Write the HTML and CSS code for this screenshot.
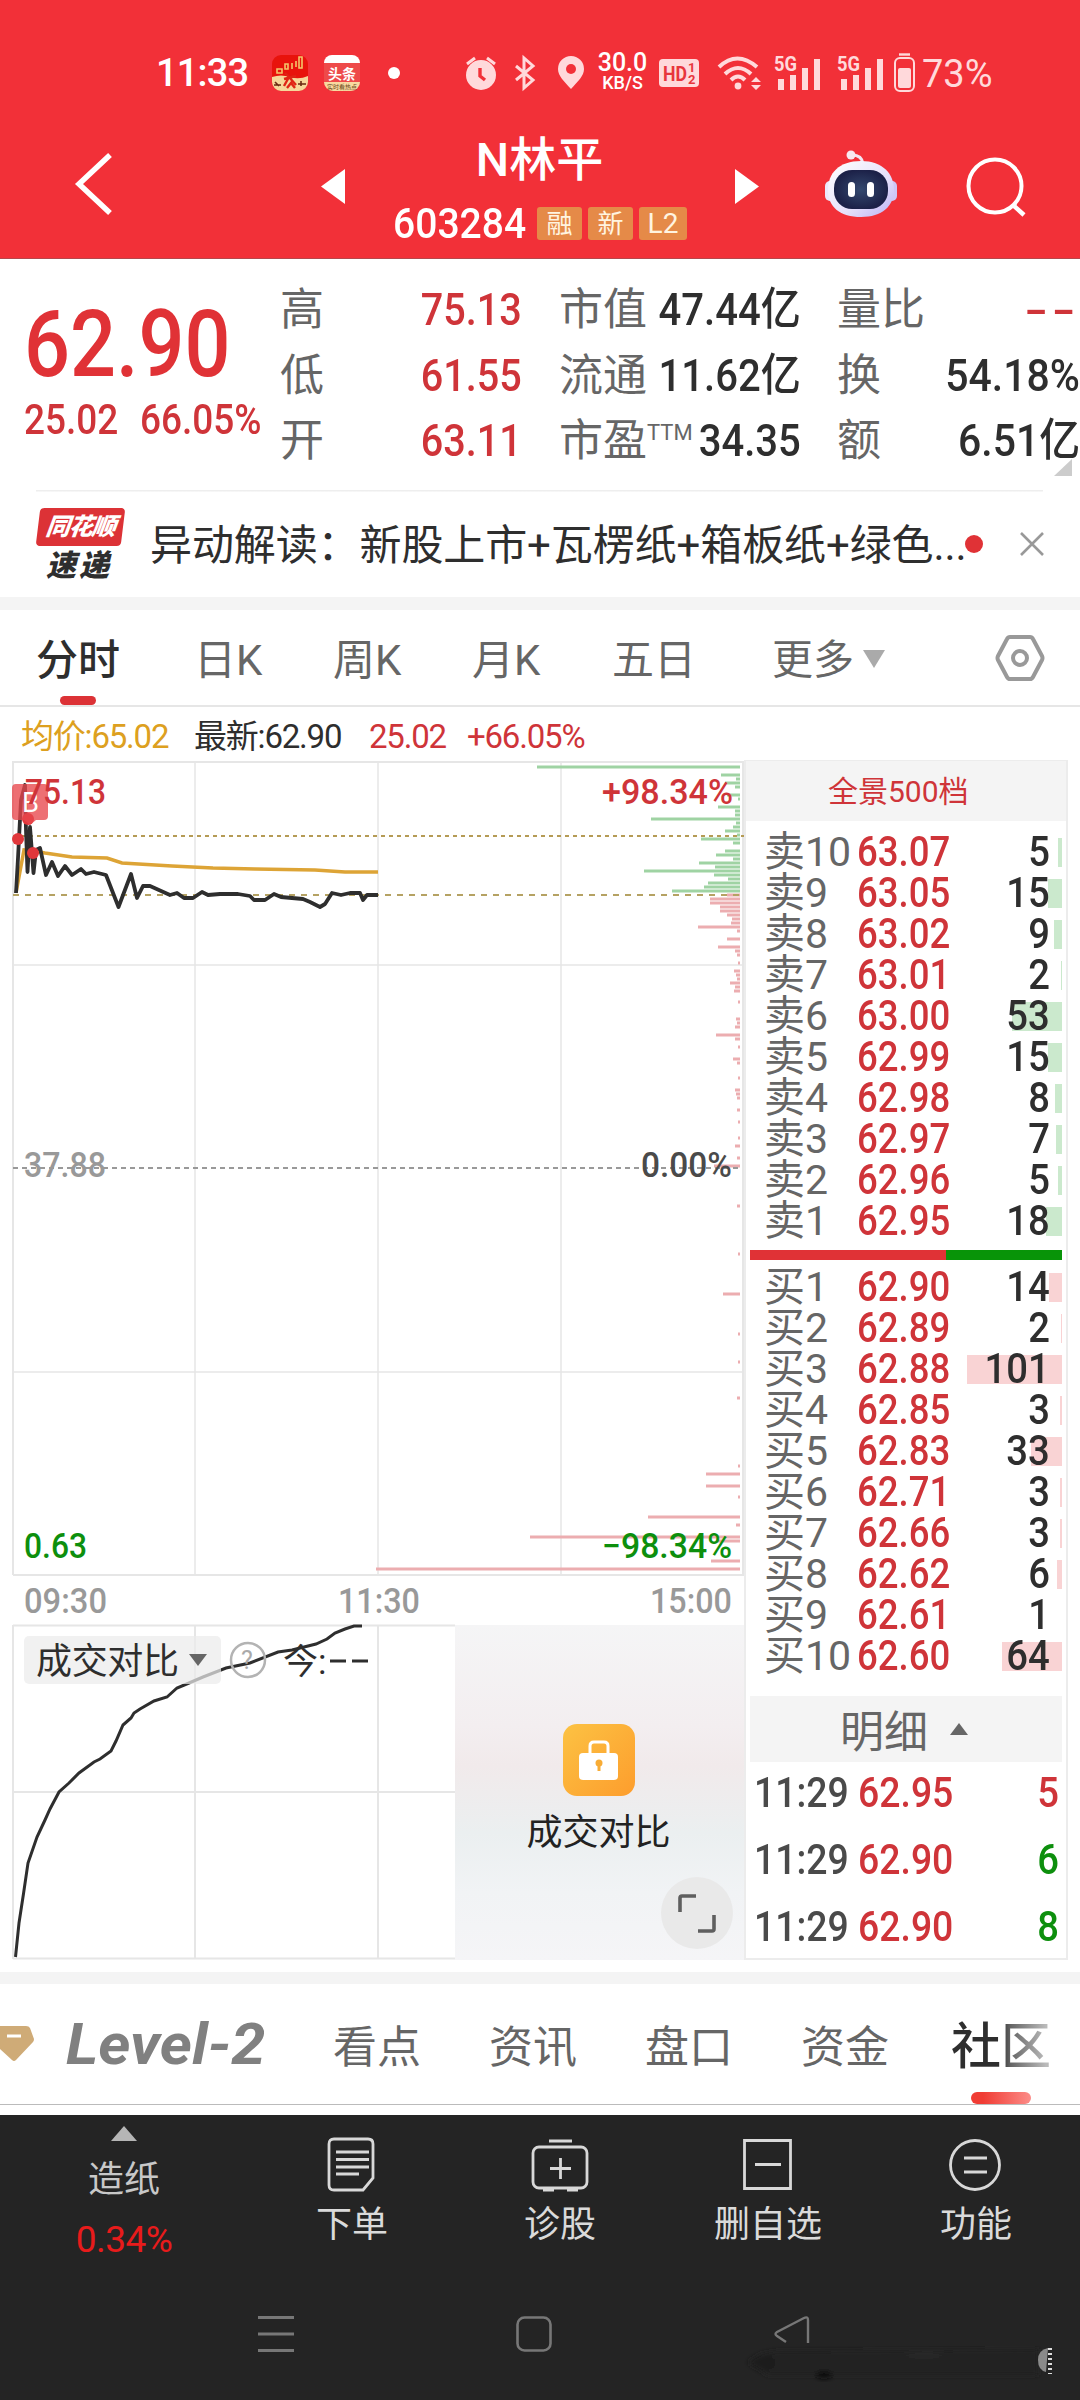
FILE: index.html
```html
<!DOCTYPE html>
<html lang="zh-CN">
<head>
    <meta charset="UTF-8">
    <meta name="viewport" content="width=1080">
    <title>N林平 603284</title>
    <link rel="stylesheet" href="styles.css">
</head>
<body>
    <header class="header">
        <div class="status-bar">
            <span class="clock">11:33</span>
            <svg class="app-icon first" viewBox="0 0 36 36">
                <rect width="36" height="36" rx="9" fill="#e8130c"/>
                <path d="M0 22q9-3 18 0t18-1v6a9 9 0 0 1-9 9H9a9 9 0 0 1-9-9z" fill="#f6d79a"/>
                <path d="M5 14h5v4H5zM13 9h3v5h-3zM20 8v6M24 6v6M27 2h3v11h-3z" stroke="#f3c66a" stroke-width="1.6" fill="none"/>
                <path d="M13 18l4 4-5 9M17 22l7 8M12 24l12-3M15 33l4-5 4 5" stroke="#e02415" stroke-width="2.4" fill="none"/>
                <path d="M2 30h7M3 27l4 4M26 29h8M29 26v5" stroke="#6b2a12" stroke-width="1.6" fill="none"/>
            </svg>
            <svg class="app-icon" viewBox="0 0 36 36">
                <rect width="36" height="36" rx="9" fill="#ee4a4a"/>
                <path d="M0 8a8 8 0 0 1 8-8h20a8 8 0 0 1 8 8z" fill="#fff"/>
                <path d="M0 27h36a9 9 0 0 1-9 9H9a9 9 0 0 1-9-9z" fill="#f8d9a0"/>
                <text x="18" y="24" class="app-name">头条</text>
                <text x="18" y="34" class="app-sub">实时看热点</text>
            </svg>
            <i class="dot"></i>
            <svg class="alarm" viewBox="0 0 32 34">
                <circle cx="16" cy="19" r="15" fill="#ffd9db"/>
                <path d="M2 8l8-6M30 8l-8-6" stroke="#ffd9db" stroke-width="3"/>
                <path d="M15 12v8l5 4" stroke="#f23038" stroke-width="3.4" fill="none"/>
            </svg>
            <svg class="bluetooth" viewBox="0 0 20 34">
                <path d="M1 10l17 14-9 8V2l9 8L1 24" fill="none" stroke="#ffd9db" stroke-width="3"/>
            </svg>
            <svg class="pin" viewBox="0 0 26 34">
                <path d="M13 33C6 25 0 20 0 13a13 13 0 0 1 26 0c0 7-6 12-13 20z" fill="#ffd9db"/>
                <circle cx="13" cy="13" r="5" fill="#f23038"/>
            </svg>
            <div class="speed"><b>30.0</b><span>KB/S</span></div>
            <svg class="hd" viewBox="0 0 40 28">
                <rect width="40" height="28" rx="4" fill="#ffd9db"/>
                <text x="4" y="22" font-size="21" font-weight="700" textLength="24" lengthAdjust="spacingAndGlyphs">HD</text>
                <text x="29" y="13" font-size="13" font-weight="700">1</text>
                <text x="29" y="25" font-size="13" font-weight="700">2</text>
            </svg>
            <svg class="wifi" viewBox="0 0 46 34">
                <path d="M2 11q18-17 38 0M8 18q13-12 26 0M14 24q7-7 14 0" fill="none" stroke="#ffd9db" stroke-width="4"/>
                <circle cx="21" cy="30" r="3.4" fill="#ffd9db"/>
                <path d="M34 26l5-5 5 5zM34 29l5 5 5-5z" fill="#ffd9db"/>
            </svg>
            <svg class="signal" viewBox="0 0 48 34">
                <text x="0" y="15" font-size="20" font-weight="700" textLength="23" lengthAdjust="spacingAndGlyphs">5G</text>
                <path d="M7 23v11M19 19v15M31 12v22M43 3v31" stroke="#ffd9db" stroke-width="6"/>
            </svg>
            <svg class="signal second" viewBox="0 0 48 34">
                <text x="0" y="15" font-size="20" font-weight="700" textLength="23" lengthAdjust="spacingAndGlyphs">5G</text>
                <path d="M7 23v11M19 19v15M31 12v22M43 3v31" stroke="#ffd9db" stroke-width="6"/>
            </svg>
            <svg class="battery" viewBox="0 0 21 40">
                <path d="M5 1.5h11" stroke="#ffd9db" stroke-width="2.4"/>
                <rect x="1" y="5" width="19" height="33" rx="5" fill="none" stroke="#ffd9db" stroke-width="2"/>
                <rect x="4" y="15" width="13" height="20" rx="2" fill="#ffd9db"/>
            </svg>
            <span class="percent">73%</span>
        </div>
        <div class="title-bar">
            <svg class="back" viewBox="0 0 38 66"><path d="M35 4L4 33l31 29" fill="none" stroke="#fff" stroke-width="5.5"/></svg>
            <svg class="prev" viewBox="0 0 24 35"><path d="M24 0v35L0 17.5z" fill="#fff"/></svg>
            <div class="stock">
                <h1>N林平</h1>
                <div class="code">
                    <span>603284</span>
                    <i>融</i><i>新</i><i class="l2">L2</i>
                </div>
            </div>
            <svg class="next" viewBox="0 0 24 35"><path d="M0 0v35l24-17.500z" fill="#fff"/></svg>
            <svg class="robot" viewBox="0 0 72 68">
                <defs>
                    <linearGradient id="shell" x1="0" y1="0" x2="1" y2="1">
                        <stop offset="0" stop-color="#fff"/><stop offset=".6" stop-color="#e6e0fa"/><stop offset="1" stop-color="#b9b0f4"/>
                    </linearGradient>
                    <radialGradient id="visor"><stop offset="0" stop-color="#33486e"/><stop offset="1" stop-color="#1c2148"/></radialGradient>
                </defs>
                <path d="M27 5q10 0 11 9" fill="none" stroke="#f4e6f2" stroke-width="3"/>
                <circle cx="26" cy="5" r="4.500" fill="#f8e9f0"/>
                <rect x="0" y="31" width="10" height="20" rx="5" fill="#ece8fb"/>
                <rect x="62" y="31" width="10" height="20" rx="5" fill="#cfc6f6"/>
                <path d="M36 11c22 0 33 13 33 29S57 67 36 67 3 57 3 40s11-29 33-29z" fill="url(#shell)"/>
                <rect x="9" y="20" width="54" height="39" rx="18" fill="url(#visor)"/>
                <rect x="23" y="32" width="7" height="15" rx="3.500" fill="#fff"/>
                <rect x="42" y="32" width="7" height="15" rx="3.500" fill="#fff"/>
            </svg>
            <svg class="search" viewBox="0 0 60 60">
                <circle cx="29" cy="29" r="26.500" fill="none" stroke="#fff" stroke-width="4"/>
                <path d="M47 48l11 10" stroke="#fff" stroke-width="4.500"/>
            </svg>
        </div>
    </header>

    <section class="quote">
        <div class="last">
            <strong>62.90</strong>
            <p><span>25.02</span><span>66.05%</span></p>
        </div>
        <dl class="col-a">
            <div><dt>高</dt><dd>75.13</dd></div>
            <div><dt>低</dt><dd>61.55</dd></div>
            <div><dt>开</dt><dd>63.11</dd></div>
        </dl>
        <dl class="col-b">
            <div><dt>市值</dt><dd>47.44亿</dd></div>
            <div><dt>流通</dt><dd>11.62亿</dd></div>
            <div><dt>市盈<sup>TTM</sup></dt><dd>34.35</dd></div>
        </dl>
        <dl class="col-c">
            <div><dt>量比</dt><dd class="none">--</dd></div>
            <div><dt>换</dt><dd>54.18%</dd></div>
            <div><dt>额</dt><dd>6.51亿</dd></div>
        </dl>
        <i class="corner"></i>
    </section>

    <section class="news">
        <div class="news-logo"><b>同花顺</b><span>速递</span></div>
        <p>异动解读：新股上市+瓦楞纸+箱板纸+绿色...</p>
        <i class="unread"></i>
        <svg class="close" viewBox="0 0 24 24"><path d="M1 1l22 22M23 1L1 23" stroke="#999" stroke-width="2.600"/></svg>
    </section>

    <nav class="period">
        <a class="active">分时</a><a>日K</a><a>周K</a><a>月K</a><a>五日</a><a class="more">更多<i></i></a>
        <svg class="gear" viewBox="0 0 48 46">
            <path d="M14 2h20q2 0 3 2l9 17q1 2 0 4l-9 17q-1 2-3 2H14q-2 0-3-2L2 25q-1-2 0-4l9-17q1-2 3-2z" fill="none" stroke="#999" stroke-width="4"/>
            <circle cx="24" cy="23" r="7" fill="none" stroke="#999" stroke-width="4"/>
        </svg>
    </nav>

    <div class="tick">
        <span class="avg">均价:65.02</span><span class="now">最新:62.90</span><span class="chg">25.02</span><span class="pct">+66.05%</span>
    </div>

    <main class="board">
        <div class="charts">
            <!-- minute chart, y runs in page pixels -->
            <svg class="minute" viewBox="0 760 744 865" width="744" height="865">
                <g fill="none" stroke="#e6e6e6" stroke-width="2">
                    <path d="M13 762H744M13 1575H744M13 761V1575M743 761V1575"/>
                    <path d="M195 761V1575M378 761V1575M561 761V1575M13 965H744M13 1372H744" stroke-width="1.500"/>
                </g>
                <path class="asks" d="M537 767H740M721 775H740M736 779H740M725 783H740M735 787H740M727 795H740M738 799H740M718 807H740M735 811H740M735 815H740M651 819H740M736 823H740M733 827H740M725 831H740M737 835H740M701 839H740M733 843H740M725 851H740M716 855H740M733 859H740M699 863H740M715 867H740M644 871H740M714 875H740M728 879H740M708 883H740M704 887H740M672 891H740"/>
                <path class="bids" d="M727 895H740M710 899H740M710 903H740M720 907H740M720 911H740M727 915H740M732 919H740M731 923H740M698 927H740M737 931H740M727 939H740M718 947H740M735 951H740M737 955H740M738 963H740M734 971H740M736 975H740M737 979H740M730 983H740M735 987H740M734 991H740M738 1002H740M736 1019H740M737 1023H740M735 1027H740M716 1035H740M735 1039H740M738 1047H740M733 1059H740M737 1063H740M738 1078H740M735 1090H740M736 1094H740M737 1098H740M737 1110H740M738 1122H740M738 1138H740M735 1146H740M737 1158H740M714 1166H740M737 1206H740M738 1254H740M723 1294H740M738 1334H740M738 1362H740M737 1398H740M738 1466H740M706 1474H740M706 1486H740M738 1497H740M648 1517H740M736 1525H740M530 1537H740M716 1541H740M711 1561H740M376 1569H740"/>
                <path d="M13 836H744" stroke="#b59b55" stroke-width="2" stroke-dasharray="4 4"/>
                <path d="M13 895H744" stroke="#b5a263" stroke-width="2" stroke-dasharray="6 6"/>
                <path d="M13 1168H740" stroke="#999" stroke-width="1.800" stroke-dasharray="5 4"/>
                <path d="M16 893L24 850 34 851 45 853 72 857 107 858 122 863 172 866 213 868 255 869 315 870 345 872H378" fill="none" stroke="#dda436" stroke-width="3.500"/>
                <path d="M16 893L18 858 21 800 25 785 26 830 27.500 872 30 827 33.500 873 36 850 40 848 46 875 52 862 58 876 65 866 72 875 81 869 86 874 94 872 106 875 118.500 907 131 874 137 898 143 886 150 886 170 895 177 893 184 898 193 898 202 892 208 895 220 894 238 894 250 896 254 900 265 900 274 894 281 897 303 899 310 902 320 907 325 904 332 893 341 895 350 893 360 893 363 900 367 895 378 895" fill="none" stroke="#2e2e2e" stroke-width="3.800" stroke-linejoin="round"/>
                <g fill="#e0373b">
                    <circle cx="18" cy="839" r="6"/><circle cx="28" cy="819" r="6"/><circle cx="33" cy="853" r="6"/>
                </g>
                <path d="M16 784h28q4 0 4 4v28q0 4-4 4h-8l-6 5-6-5h-8q-4 0-4-4v-28q0-4 4-4z" fill="#e8474b" fill-opacity=".78"/>
                <text x="22" y="812" font-size="28" fill="#fff" textLength="17" lengthAdjust="spacingAndGlyphs">B</text>
                <g font-size="35" font-weight="500">
                    <text x="25" y="803.500" fill="#cf3439" textLength="81" lengthAdjust="spacingAndGlyphs">75.13</text>
                    <text x="602" y="803.500" fill="#cf3439" textLength="131" lengthAdjust="spacingAndGlyphs">+98.34%</text>
                    <text x="24" y="1177" fill="#999" textLength="82" lengthAdjust="spacingAndGlyphs">37.88</text>
                    <text x="641" y="1177" fill="#4a4a4a" textLength="91" lengthAdjust="spacingAndGlyphs">0.00%</text>
                    <text x="24" y="1558" fill="#0d8f0d" textLength="63" lengthAdjust="spacingAndGlyphs">0.63</text>
                    <text x="602" y="1558" fill="#0d8f0d" textLength="130" lengthAdjust="spacingAndGlyphs">−98.34%</text>
                    <g fill="#999">
                        <text x="24" y="1613" textLength="83" lengthAdjust="spacingAndGlyphs">09:30</text>
                        <text x="338" y="1613" textLength="82" lengthAdjust="spacingAndGlyphs">11:30</text>
                        <text x="650" y="1613" textLength="82" lengthAdjust="spacingAndGlyphs">15:00</text>
                    </g>
                </g>
            </svg>
            <div class="volume">
                <svg viewBox="0 1625 455 335" width="455" height="335">
                    <path d="M13 1625.500H455M13 1792H455M13 1958.500H455M13 1625V1959M195 1625V1959M378 1625V1959" fill="none" stroke="#e6e6e6" stroke-width="2"/>
                    <path d="M15.500 1957L19 1923 23.600 1893 28 1863 37 1837 45 1820 50 1809 59 1792 69 1783 79 1773 94 1762 100 1759 111 1751 116 1741 123 1725 131 1718 134 1713 140 1709 154 1701 167 1697 177 1688 189 1683 203 1677 226 1668 250 1663 278 1652 292 1650 316 1644 327 1639 335 1633 345 1629 354 1626H362" fill="none" stroke="#2e2e2e" stroke-width="3"/>
                    <rect x="24" y="1636" width="197" height="48" rx="5" fill="#ececec" fill-opacity=".72"/>
                    <text x="36" y="1674" font-size="36" fill="#2e2e2e" textLength="143">成交对比</text>
                    <path d="M189 1654h18l-9 12z" fill="#666"/>
                    <circle cx="248" cy="1660" r="17" fill="none" stroke="#b3b3b3" stroke-width="2.500"/>
                    <text x="241" y="1669" font-size="25" fill="#aaa">?</text>
                    <text x="283" y="1674" font-size="35" fill="#2e2e2e">今:</text>
                    <path d="M330 1661h16M352 1661h16" stroke="#2e2e2e" stroke-width="3"/>
                </svg>
                <div class="locked">
                    <svg class="lock" viewBox="0 0 72 72">
                        <defs><linearGradient id="gold" x1="0" y1="0" x2="1" y2="1"><stop offset="0" stop-color="#fcc243"/><stop offset="1" stop-color="#fd9d2d"/></linearGradient></defs>
                        <rect width="72" height="72" rx="14" fill="url(#gold)"/>
                        <path d="M27 32V22q0-4 4-4h10q4 0 4 4v10" fill="none" stroke="#fff" stroke-width="3"/>
                        <rect x="16" y="29" width="39" height="27" rx="4" fill="#fff"/>
                        <circle cx="36" cy="39" r="3.500" fill="#f8ac35"/><path d="M36 39v8" stroke="#f8ac35" stroke-width="3"/>
                    </svg>
                    <span>成交对比</span>
                    <svg class="expand" viewBox="0 0 72 72">
                        <circle cx="36" cy="36" r="36" fill="#e9e9e9"/>
                        <path d="M19 35V21q0-2 2-2h14M53 38v14q0 2-2 2H37" fill="none" stroke="#5f5f5f" stroke-width="3.600"/>
                    </svg>
                </div>
            </div>
        </div>

        <aside class="depth">
            <h2>全景500档</h2>
            <ul class="levels sell">
                <li><i style="width:4px"></i><span>卖10</span><b>63.07</b><em>5</em></li>
                <li><i style="width:14px"></i><span>卖9</span><b>63.05</b><em>15</em></li>
                <li><i style="width:8px"></i><span>卖8</span><b>63.02</b><em>9</em></li>
                <li><i style="width:1px"></i><span>卖7</span><b>63.01</b><em>2</em></li>
                <li><i style="width:50px"></i><span>卖6</span><b>63.00</b><em>53</em></li>
                <li><i style="width:14px"></i><span>卖5</span><b>62.99</b><em>15</em></li>
                <li><i style="width:7px"></i><span>卖4</span><b>62.98</b><em>8</em></li>
                <li><i style="width:6px"></i><span>卖3</span><b>62.97</b><em>7</em></li>
                <li><i style="width:4px"></i><span>卖2</span><b>62.96</b><em>5</em></li>
                <li><i style="width:16px"></i><span>卖1</span><b>62.95</b><em>18</em></li>
            </ul>
            <div class="ratio"><i style="width:196px"></i></div>
            <ul class="levels buy">
                <li><i style="width:13px"></i><span>买1</span><b>62.90</b><em>14</em></li>
                <li><i style="width:1px"></i><span>买2</span><b>62.89</b><em>2</em></li>
                <li><i style="width:95px"></i><span>买3</span><b>62.88</b><em>101</em></li>
                <li><i style="width:2px"></i><span>买4</span><b>62.85</b><em>3</em></li>
                <li><i style="width:31px"></i><span>买5</span><b>62.83</b><em>33</em></li>
                <li><i style="width:2px"></i><span>买6</span><b>62.71</b><em>3</em></li>
                <li><i style="width:2px"></i><span>买7</span><b>62.66</b><em>3</em></li>
                <li><i style="width:5px"></i><span>买8</span><b>62.62</b><em>6</em></li>
                <li><span>买9</span><b>62.61</b><em>1</em></li>
                <li><i style="width:60px"></i><span>买10</span><b>62.60</b><em>64</em></li>
            </ul>
            <h3>明细<i></i></h3>
            <ul class="deals">
                <li><span>11:29</span><b>62.95</b><em class="up">5</em></li>
                <li><span>11:29</span><b>62.90</b><em>6</em></li>
                <li><span>11:29</span><b>62.90</b><em>8</em></li>
            </ul>
        </aside>
    </main>

    <nav class="tabs">
        <svg class="gem" viewBox="0 0 34 38"><path d="M0 1h26q3 0 4 2l4 11q0 2-1 3L16 35q-2 2-4 0L0 24z" fill="#cfab77"/><path d="M7 11h14" stroke="#fff" stroke-width="3"/></svg>
        <a class="level2"><span>Level-2</span></a><a>看点</a><a>资讯</a><a>盘口</a><a>资金</a><a class="active"><span>社区</span></a>
    </nav>

    <footer class="footer">
        <div class="actions">
            <a class="sector"><i></i><span>造纸</span><b>0.34%</b></a>
            <a>
                <svg viewBox="0 0 58 56"><path d="M11 3h34q5 0 5 5v34L40 54H11q-5 0-5-5V8q0-5 5-5zM13 16h33M13 23.500h33M13 31h33M13 38h23" fill="none" stroke="#d8d8d8" stroke-width="2.800"/></svg>
                <span>下单</span>
            </a>
            <a>
                <svg viewBox="0 0 58 56"><rect x="2" y="11" width="54" height="41" rx="6" fill="none" stroke="#d8d8d8" stroke-width="2.800"/><path d="M18 5h23M12 54h11M36 54h11M29.500 22v21M19 32.500h21" stroke="#d8d8d8" stroke-width="2.800"/></svg>
                <span>诊股</span>
            </a>
            <a>
                <svg viewBox="0 0 58 56"><path d="M5.500 4.500h46v48h-46zM16 28.500h26" fill="none" stroke="#d8d8d8" stroke-width="2.800"/></svg>
                <span>删自选</span>
            </a>
            <a>
                <svg viewBox="0 0 58 56"><circle cx="28" cy="29" r="24.500" fill="none" stroke="#d8d8d8" stroke-width="2.800"/><path d="M17 22h23M17 36h23" stroke="#d8d8d8" stroke-width="2.800"/></svg>
                <span>功能</span>
            </a>
        </div>
        <div class="sysnav">
            <svg viewBox="0 0 36 36"><path d="M0 1.500h36M0 18h36M0 34.500h36" stroke="#777" stroke-width="3"/></svg>
            <svg viewBox="0 0 36 36"><rect x="1.500" y="1.500" width="33" height="33" rx="7" fill="none" stroke="#777" stroke-width="2.600"/></svg>
            <svg viewBox="0 0 36 36"><path d="M12 26L3 20q-3-2 0-4L30 2q4-2 4 2v23" fill="none" stroke="#777" stroke-width="2.400"/></svg>
        </div>
        <svg class="smudge" viewBox="0 0 312 40">
            <defs><filter id="soft"><feGaussianBlur stdDeviation="2.500"/></filter></defs>
            <g filter="url(#soft)">
                <path d="M4 22q10-12 34-12l256-2v26H24z" fill="#212121"/>
                <ellipse cx="20" cy="22" rx="11" ry="7" fill="#1a1a1a"/>
                <ellipse cx="80" cy="34" rx="8" ry="4" fill="#0a0a0a"/>
                <ellipse cx="180" cy="14" rx="20" ry="4" fill="#282828"/>
            </g>
            <path d="M304 7q-10 2-10 12t8 12z" fill="#8a8a8a"/>
            <path d="M306 7v26" stroke="#ddd" stroke-width="4" stroke-dasharray="2 3"/>
        </svg>
    </footer>
</body>
</html>
```
FILE: styles.css
```css
* {
    box-sizing: border-box;
    margin: 0;
    padding: 0;
}
body {
    width: 1080px;
    height: 2400px;
    overflow: hidden;
    background: #fff;
    font-family: Roboto, "Noto Sans CJK SC", sans-serif;
    color: #2e2e2e;
}
i, em {
    font-style: normal;
}
ul {
    list-style: none;
}
svg {
    display: block;
    flex: none;
    overflow: visible;
}

/* header */
.header {
    height: 259px;
    background: #f23038;
    color: #fff;
    border-bottom: 1px solid #b5474c;
}
.status-bar {
    display: flex;
    align-items: center;
    height: 145px;
    padding-left: 156px;
}
.clock {
    width: 116px;
    font-size: 38px;
    font-weight: 500;
    letter-spacing: -0.8px;
}
.app-icon {
    width: 36px;
    height: 36px;
    margin-right: 28px;
}
.app-icon.first {
    margin-right: 16px;
}
.app-name {
    font-size: 14px;
    font-weight: 700;
    fill: #fff;
    text-anchor: middle;
}
.app-sub {
    font-size: 6px;
    fill: #6b4a1c;
    text-anchor: middle;
}
.dot {
    width: 12px;
    height: 12px;
    margin-right: 65px;
    border-radius: 50%;
    background: #fff;
}
.alarm {
    width: 32px;
    height: 34px;
    margin-right: 18px;
}
.bluetooth {
    width: 20px;
    height: 34px;
    margin-right: 23px;
}
.pin {
    width: 26px;
    height: 34px;
    margin-right: 13px;
}
.speed {
    width: 62px;
    padding-right: 11px;
    text-align: center;
}
.speed b {
    display: block;
    font-size: 25px;
    font-weight: 500;
    line-height: 19px;
}
.speed span {
    display: block;
    font-size: 18px;
    font-weight: 500;
    line-height: 21px;
}
.hd {
    width: 40px;
    height: 28px;
    margin-right: 18px;
    fill: #e8363d;
}
.wifi {
    width: 46px;
    height: 34px;
    margin-right: 11px;
}
.signal {
    width: 48px;
    height: 34px;
    margin-right: 15px;
    fill: #ffd9db;
}
.signal.second {
    margin-right: 9px;
}
.battery {
    width: 21px;
    height: 40px;
    margin-right: 7px;
}
.percent {
    font-size: 38px;
    line-height: 44px;
    padding-top: 2px;
    color: #ffd9db;
}
.title-bar {
    display: flex;
    align-items: flex-start;
    padding-left: 75px;
}
.back {
    width: 38px;
    height: 66px;
    margin: 6px 208px 0 0;
}
.prev, .next {
    width: 24px;
    height: 35px;
    margin-top: 24px;
}
.stock {
    width: 390px;
    height: 110px;
    padding: 0 47px 0 48px;
    margin-top: -14px;
}
.stock h1 {
    font-size: 47px;
    font-weight: 500;
    line-height: 57px;
    text-align: center;
    text-indent: -2px;
}
.code {
    display: flex;
    align-items: center;
    gap: 6px;
    height: 42px;
    margin-top: 14px;
    white-space: nowrap;
}
.code span {
    width: 138px;
    font-size: 42px;
    font-weight: 500;
    transform: scaleX(.93);
    transform-origin: left;
}
.code i {
    flex: none;
    width: 45px;
    height: 33px;
    border-radius: 3px;
    background: #e58a48;
    color: #fff4e0;
    font-size: 26px;
    line-height: 34px;
    text-align: center;
}
.code i.l2 {
    width: 48px;
    font-size: 28px;
}
.robot {
    width: 72px;
    height: 68px;
    margin: 5px 69px 0 66px;
}
.search {
    width: 60px;
    height: 60px;
    margin-top: 12px;
}

/* quote */
.quote {
    position: relative;
    display: flex;
    height: 231px;
    padding-top: 18px;
}
.last {
    width: 280px;
    padding-left: 24px;
    color: #e03236;
}
.last strong, .last span {
    display: block;
    transform: scaleX(.88);
    transform-origin: left;
}
.last strong {
    margin-top: 16px;
    font-size: 92px;
    font-weight: 500;
    line-height: 104px;
}
.last p {
    display: flex;
    font-size: 42px;
    font-weight: 500;
    line-height: 46px;
    color: #cf3439;
}
.last span:first-child {
    width: 116px;
}
.quote dl > div {
    display: flex;
    justify-content: space-between;
    height: 65.5px;
    line-height: 66px;
    white-space: nowrap;
}
.quote dt {
    font-size: 44px;
    color: #666;
}
.quote dd {
    margin-left: -20px;
    font-size: 45px;
    font-weight: 500;
    transform: scaleX(.91);
    transform-origin: right;
}
.quote sup {
    font-size: 22px;
    line-height: 0;
    vertical-align: 16px;
}
.col-a {
    width: 242px;
    margin-right: 37px;
}
.col-a dd {
    color: #cf3439;
    transform: scaleX(.88);
}
.col-b {
    width: 242px;
    margin-right: 36px;
}
.col-b dd {
    transform: scaleX(.89);
}
.col-c {
    width: 243px;
}
.quote .none {
    color: #cf3439;
    letter-spacing: 3px;
    transform: scaleX(1.5);
}
.corner {
    position: absolute;
    left: 1054px;
    top: 200px;
    border-left: 18px solid transparent;
    border-bottom: 17px solid #ccc;
}

/* news line */
.news {
    display: flex;
    align-items: center;
    height: 120px;
    padding: 0 36px;
    border-bottom: 13px solid #f4f4f4;
    background: linear-gradient(#eee, #eee) 36px 0 / 1007px 1.5px no-repeat;
}
.news-logo {
    width: 114px;
    height: 72px;
    font-style: italic;
    font-weight: 900;
}
.news-logo b {
    display: block;
    width: 85px;
    height: 38px;
    margin-left: 2px;
    border-radius: 4px;
    background: #dc3236;
    color: #fff;
    font-size: 24px;
    line-height: 38px;
    letter-spacing: -1px;
    text-align: center;
    transform: skewX(-7deg);
}
.news-logo span {
    display: block;
    margin-left: 10px;
    font-size: 30px;
    line-height: 40px;
    letter-spacing: 3px;
}
.news p {
    width: 815px;
    padding-top: 5px;
    font-size: 42px;
    line-height: 60px;
    letter-spacing: -0.1px;
    white-space: nowrap;
}
.unread {
    width: 18px;
    height: 18px;
    margin-right: 37px;
    border-radius: 50%;
    background: #e03236;
}
.close {
    width: 24px;
    height: 24px;
}

/* period tabs */
.period {
    display: flex;
    align-items: center;
    height: 97px;
    padding-left: 36px;
    border-bottom: 2px solid #e6e6e6;
    font-size: 42px;
    color: #666;
}
.period a {
    position: relative;
    width: 140px;
    height: 95px;
    line-height: 101px;
    white-space: nowrap;
}
.period a:nth-child(1) {
    width: 158px;
}
.period a:nth-child(2), .period a:nth-child(3) {
    width: 139px;
}
.period a:nth-child(5) {
    width: 160px;
}
.period a.more {
    width: 224px;
    font-size: 41px;
}
.period .active {
    color: #2e2e2e;
    font-weight: 500;
}
.period .active::after {
    content: "";
    position: absolute;
    left: 24px;
    bottom: 0;
    width: 36px;
    height: 9px;
    border-radius: 5px;
    background: #dc3236;
}
.more i {
    display: inline-block;
    margin-left: 9px;
    border: 11px solid transparent;
    border-top: 18px solid #aaa;
    border-bottom: 0;
    vertical-align: 6px;
}
.gear {
    width: 48px;
    height: 46px;
}

.tick {
    display: flex;
    height: 53px;
    padding-left: 21px;
    font-size: 33px;
    line-height: 60px;
    letter-spacing: -1.2px;
    white-space: nowrap;
}
.tick .avg {
    width: 173px;
    color: #dda020;
}
.tick .now {
    width: 175px;
}
.tick .chg {
    width: 98px;
    color: #cf3439;
}
.tick .pct {
    color: #cf3439;
}

/* charts and order book */
.board {
    display: flex;
    height: 1212px;
}
.charts {
    width: 744px;
}
.asks {
    stroke: #9fd3a3;
    stroke-width: 2.9;
}
.bids {
    stroke: #ecadb0;
    stroke-width: 2.9;
}
.volume {
    display: flex;
}
.locked {
    position: relative;
    display: flex;
    flex-direction: column;
    align-items: center;
    width: 289px;
    height: 335px;
    padding: 99px 2px 0 0;
    background: linear-gradient(#f5f5f6 0, #f3eef0 30%, #f1eaeb 42%, #ebeff0 62%, #f1f3f5 80%, #f5f5f7 100%);
    color: #222;
    font-size: 36px;
}
.lock {
    width: 72px;
    height: 72px;
}
.locked span {
    margin-top: 14px;
    line-height: 46px;
}
.expand {
    position: absolute;
    left: 206px;
    top: 252px;
    width: 72px;
    height: 72px;
}
.depth {
    width: 324px;
    height: 1200px;
    border: 2px solid #ececec;
    border-top-width: 1px;
}
.depth h2 {
    height: 60px;
    padding-left: 82px;
    background: #f4f4f4;
    color: #cf3439;
    font-size: 30px;
    font-weight: 400;
    line-height: 62px;
}
.levels {
    margin: 10px 4px 0;
}
.levels li {
    position: relative;
    display: flex;
    height: 41px;
    padding: 0 12px 0 14px;
    line-height: 42px;
    white-space: nowrap;
}
.levels i {
    position: absolute;
    right: 0;
    top: 7px;
    height: 29px;
    background: #cbe9cd;
}
.buy i {
    background: #f9d3d4;
}
.levels span {
    position: relative;
    width: 93px;
    font-size: 41px;
    color: #666;
}
.levels b, .deals b {
    position: relative;
    font-size: 42px;
    font-weight: 500;
    color: #cf3439;
    transform: scaleX(.87);
    transform-origin: left;
}
.levels em, .deals em {
    position: relative;
    margin-left: auto;
    font-size: 42px;
    font-weight: 500;
    transform: scaleX(.91);
    transform-origin: right;
}
.ratio {
    height: 10px;
    margin: 9px 4px 0;
    background: #089408;
}
.ratio i {
    display: block;
    height: 10px;
    background: #e03236;
}
.levels.buy {
    margin-top: 6px;
}
.depth h3 {
    display: flex;
    align-items: center;
    height: 66px;
    margin: 20px 4px 0;
    padding-left: 90px;
    background: #f4f4f4;
    font-size: 44px;
    font-weight: 400;
    color: #666;
}
.depth h3 i {
    margin-left: 22px;
    border: 9px solid transparent;
    border-top: 0;
    border-bottom: 12px solid #666;
}
.deals li {
    display: flex;
    height: 60px;
    margin-bottom: 7px;
    padding: 0 7px 0 8px;
    line-height: 62px;
}
.deals span {
    width: 104px;
    font-size: 42px;
    font-weight: 500;
    color: #4a4a4a;
    transform: scaleX(.89);
    transform-origin: left;
}
.deals b {
    transform: scaleX(.89);
}
.deals em {
    color: #0d8f0d;
}
.deals .up {
    color: #cf3439;
}

/* lower tabs */
.tabs {
    display: flex;
    align-items: center;
    height: 133px;
    border-top: 12px solid #f4f4f4;
    border-bottom: 1.5px solid #bbb;
    font-size: 44px;
    color: #666;
}
.gem {
    width: 34px;
    height: 38px;
    margin-right: 32px;
}
.tabs a {
    position: relative;
    width: 156px;
    white-space: nowrap;
}
.tabs .level2 {
    width: 267px;
    font-size: 58px;
    font-style: italic;
    font-weight: 700;
    color: #808080;
}
.level2 span {
    display: inline-block;
    transform: scaleX(1.06);
    transform-origin: left;
}
.tabs .active {
    width: 108px;
    height: 120px;
    margin-left: -6px;
    font-size: 50px;
    font-weight: 500;
    line-height: 127px;
}
.active span {
    background: linear-gradient(90deg, #2e2e2e 48%, #666 60%, #bbb 95%);
    background-clip: text;
    color: transparent;
}
.tabs .active::after {
    content: "";
    position: absolute;
    left: 20px;
    bottom: 0;
    width: 60px;
    height: 12px;
    border-radius: 6px;
    background: linear-gradient(90deg, #f03c34 20%, #fc8c88);
}

/* bottom */
.footer {
    position: relative;
    height: 285px;
    margin-top: 10px;
    background: #242424;
    color: #dadada;
}
.actions {
    display: flex;
    height: 201px;
    padding-left: 20px;
}
.actions a {
    display: flex;
    flex-direction: column;
    align-items: center;
    width: 208px;
    padding-top: 21px;
    font-size: 36px;
    line-height: 46px;
}
.actions a svg {
    width: 58px;
    height: 56px;
    margin-bottom: 10px;
}
.actions .sector {
    margin-right: 20px;
    padding-top: 11px;
}
.sector i {
    border: 13px solid transparent;
    border-top: 0;
    border-bottom: 15px solid #b5b5b5;
}
.sector span {
    margin-top: 16px;
    color: #c8c8c8;
}
.sector b {
    margin-top: 14px;
    font-size: 37px;
    font-weight: 400;
    color: #e81b1b;
    letter-spacing: -0.5px;
}
.sysnav {
    display: flex;
    gap: 222px;
    padding-left: 258px;
}
.sysnav svg {
    width: 36px;
    height: 36px;
}
.smudge {
    position: absolute;
    left: 744px;
    top: 226px;
    width: 312px;
    height: 40px;
}
```
